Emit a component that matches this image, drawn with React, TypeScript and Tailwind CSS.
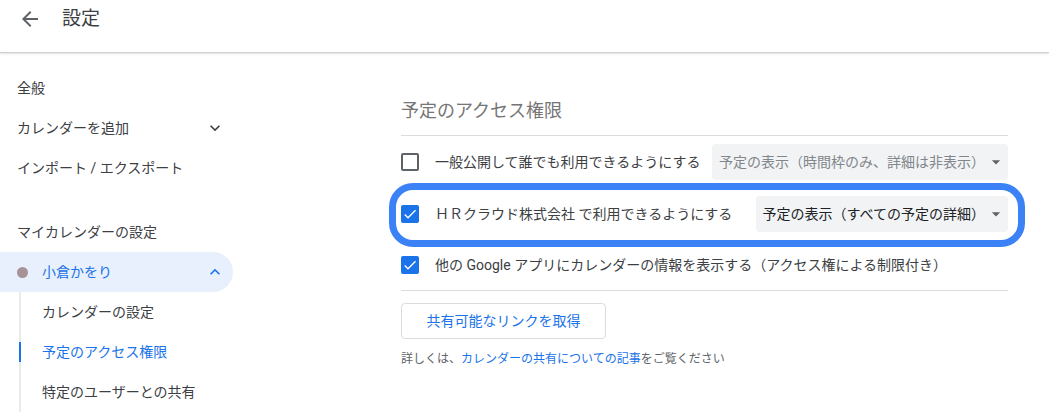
import React from "react";

const FONT = "font-['Roboto','Noto_Sans_CJK_JP',sans-serif]";

const ExpandMore: React.FC<{ className?: string }> = ({ className }) => (
  <svg viewBox="0 0 24 24" width="20" height="20" className={className} fill="currentColor">
    <path d="M16.59 8.59L12 13.17 7.41 8.59 6 10l6 6 6-6z" />
  </svg>
);

const ExpandLess: React.FC<{ className?: string }> = ({ className }) => (
  <svg viewBox="0 0 24 24" width="20" height="20" className={className} fill="currentColor">
    <path d="M12 8l-6 6 1.41 1.41L12 10.83l4.59 4.58L18 14z" />
  </svg>
);

const DropArrow = () => (
  <svg viewBox="0 0 24 24" width="20" height="20" className="text-[#5f6368]" fill="currentColor">
    <path d="M7 10l5 5 5-5z" />
  </svg>
);

const Checkbox: React.FC<{ checked?: boolean }> = ({ checked }) =>
  checked ? (
    <span className="flex size-[18px] shrink-0 items-center justify-center rounded-[2px] bg-[#1a73e8]">
      <svg viewBox="0 0 24 24" width="16" height="16" fill="white">
        <path d="M9 16.17L4.83 12l-1.42 1.41L9 19 21 7l-1.41-1.41z" />
      </svg>
    </span>
  ) : (
    <span className="size-[18px] shrink-0 rounded-[2px] border-2 border-[#5f6368]" />
  );

const Select: React.FC<{ label: string; disabled?: boolean }> = ({ label, disabled }) => (
  <div
    className={`ml-auto flex h-9 items-center rounded bg-[#f1f3f4] pl-[7px] pr-[2px] text-sm ${
      disabled ? "text-[#80868b]" : "text-[#202124]"
    }`}
  >
    <span>{label}</span>
    <span className="ml-[1px]">
      <DropArrow />
    </span>
  </div>
);

export default function App() {
  return (
    <div className={`h-[414px] w-full overflow-hidden bg-white ${FONT}`}>
      {/* header */}
      <header className="h-[53px] border-b border-[#cfcfcf] shadow-[0_1px_2px_rgba(0,0,0,0.12)]">
        <div className="flex items-center pt-[7px]">
          <svg viewBox="0 0 24 24" width="24" height="24" className="ml-[18px] text-[#5f6368]" fill="currentColor">
            <path d="M20 11H7.83l5.59-5.59L12 4l-8 8 8 8 1.41-1.41L7.83 13H20v-2z" />
          </svg>
          <span className="ml-[20px] text-[19px] leading-6 text-[#3c4043]">設定</span>
        </div>
      </header>

      <div className="flex">
        {/* sidebar */}
        <nav className="w-[256px] shrink-0 pt-[15px] text-sm text-[#3c4043]">
          <div className="flex h-10 items-center pl-[17px]">全般</div>
          <div className="flex h-10 w-[233px] items-center justify-between pl-[17px] pr-[8px]">
            <span>カレンダーを追加</span>
            <ExpandMore className="text-[#3c4043]" />
          </div>
          <div className="flex h-10 items-center pl-[17px]">インポート / エクスポート</div>

          <div className="mt-[24px] flex h-10 items-center pl-[17px]">マイカレンダーの設定</div>
          <div className="flex h-10 w-[233px] items-center rounded-r-full bg-[#e8f0fe] pr-[8px] text-[#1a73e8]">
            <span className="ml-[17px] size-[11px] rounded-full bg-[#a79397]" />
            <span className="ml-[14px]">小倉かをり</span>
            <ExpandLess className="ml-auto text-[#1a73e8]" />
          </div>
          <div className="ml-[19px] mt-[10px] border-l-2 border-[#e8eaed]">
            <div className="-mt-[10px] flex h-10 items-center pl-[21px]">カレンダーの設定</div>
            <div className="relative flex h-10 items-center pl-[21px] text-[#1a73e8]">
              <span className="absolute -left-[2px] top-[10px] h-5 w-[2px] bg-[#1a73e8]" />
              予定のアクセス権限
            </div>
            <div className="flex h-10 items-center pl-[21px]">特定のユーザーとの共有</div>
          </div>
        </nav>

        {/* main */}
        <main className="flex-1 pl-[145px] pr-[41px] pt-[45px]">
          <h2 className="text-[18px] leading-[26px] text-[#757575]">予定のアクセス権限</h2>
          <div className="mt-[11px] border-t border-[#dadce0]" />

          <div className="flex h-[52px] items-center text-sm text-[#3c4043]">
            <Checkbox />
            <span className="ml-4">一般公開して誰でも利用できるようにする</span>
            <Select label="予定の表示（時間枠のみ、詳細は非表示）" disabled />
          </div>

          <div className="relative flex h-[52px] items-center text-sm text-[#3c4043]">
            <div className="pointer-events-none absolute -bottom-[7px] -left-[12px] -right-[17px] -top-[5px] rounded-[24px] border-[7px] border-[#3b82f6]" />
            <Checkbox checked />
            <span className="ml-4">ＨＲクラウド株式会社 で利用できるようにする</span>
            <Select label="予定の表示（すべての予定の詳細）" />
          </div>

          <div className="flex h-[50px] items-center text-sm text-[#3c4043]">
            <Checkbox checked />
            <span className="ml-4">他の Google アプリにカレンダーの情報を表示する（アクセス権による制限付き）</span>
          </div>

          <div className="border-t border-[#dadce0]" />

          <button className="mt-[12px] flex h-9 w-[205px] items-center justify-center rounded border border-[#dadce0] text-sm text-[#1a73e8]">
            共有可能なリンクを取得
          </button>

          <p className="mt-[12px] text-xs leading-4 text-[#5f6368]">
            詳しくは、<span className="text-[#1a73e8]">カレンダーの共有についての記事</span>をご覧ください
          </p>
        </main>
      </div>
    </div>
  );
}
